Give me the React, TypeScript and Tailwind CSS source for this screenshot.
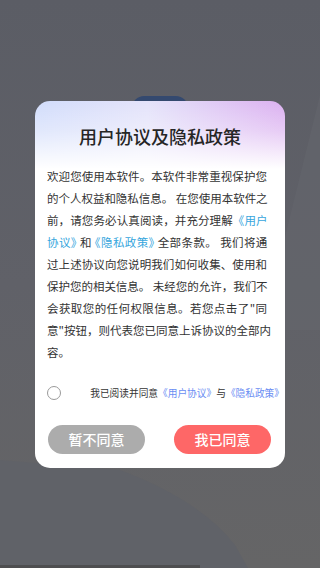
import React from "react";

const Link = ({ children }: { children: React.ReactNode }) => (
  <span className="text-[#36a6dd]">{children}</span>
);

const H = ({ children }: { children: React.ReactNode }) => (
  <span className="[font-feature-settings:'halt']">{children}</span>
);

export default function App() {
  const j = "h-[22px] whitespace-nowrap text-justify [text-align-last:justify]";
  return (
    <div className="relative w-[320px] h-[568px] overflow-hidden bg-[#626368] font-['Noto_Sans_CJK_SC','Noto_Sans',sans-serif]">
      <svg className="absolute inset-0" width="320" height="568" viewBox="0 0 320 568">
        <defs>
          <linearGradient id="bgv" x1="0" y1="0" x2="0" y2="1">
            <stop offset="0" stopColor="#5b5d65" />
            <stop offset="0.5" stopColor="#606168" />
            <stop offset="1" stopColor="#656566" />
          </linearGradient>
        </defs>
        <rect width="320" height="568" fill="url(#bgv)" />
        <path d="M320 95 L262 330 L320 330 Z" fill="#64656c" opacity="0.6" />
        <path d="M0 460 L120 470 Q200 500 235 545 L248 568 L0 568 Z" fill="#606268" />
        <rect x="0" y="565" width="200" height="3" fill="#4e4e50" />
      </svg>
      <div className="absolute left-[132px] top-[96px] w-[56px] h-[30px] rounded-[12px] bg-[#34496f]" />
      <div className="relative flex h-full items-center justify-center">
        <div className="w-[250px] h-[367px] rounded-[15px] overflow-hidden bg-[linear-gradient(to_bottom,rgba(255,255,255,0)_0px,rgba(255,255,255,0.35)_30px,#ffffff_68px),linear-gradient(to_right,#d1dcfb_0%,#e4e3fa_45%,#dbb0f0_100%)] flex flex-col">
          <div className="pt-[24px] h-[46px] text-center text-[18px] leading-[22px] text-[#262626] font-medium">
            用户协议及隐私政策
          </div>
          <div className="mt-[18px] ml-[12px] w-[220px] text-[11.5px] leading-[22px] text-[#333333]">
            <div className={j}>欢迎您使用本软件。本软件非常重视保护您</div>
            <div className={j + " tracking-[-0.62px]"}>的个人权益和隐私信息。 在您使用本软件之</div>
            <div className={j + " tracking-[-0.58px]"}>
              前，请您务必认真阅读，并充分理解<Link>《用户</Link>
            </div>
            <div className={j + " tracking-[-0.25px]"}>
              <Link>
                协议<H>》</H>
              </Link>{" "}
              和{" "}
              <Link>
                <H>《</H>隐私政策<H>》</H>
              </Link>{" "}
              全部条款。 我们将通
            </div>
            <div className={j}>过上述协议向您说明我们如何收集、使用和</div>
            <div className={j + " tracking-[-0.62px]"}>保护您的相关信息。 未经您的允许，我们不</div>
            <div className={j}>会获取您的任何权限信息。若您点击了"同</div>
            <div className={j}>意"按钮，则代表您已同意上诉协议的全部内</div>
            <div className="h-[22px] whitespace-nowrap">容。</div>
          </div>
          <div className="mt-[20px] h-[20px] flex items-center pl-[12px] pr-[1px]">
            <div className="w-[14px] h-[14px] rounded-full border border-[#9a9a9a] bg-white shrink-0" />
            <div className="flex-1 text-right text-[9.7px] leading-[20px] text-[#333333] whitespace-nowrap">
              我已阅读并同意<span className="text-[#6a8df3]">《用户协议》</span>与<span className="text-[#6a8df3]">《隐私政策》</span>
            </div>
          </div>
          <div className="mt-[22px] flex justify-between pl-[13px] pr-[14px]">
            <button className="w-[97px] h-[29px] rounded-full bg-[#acacac] text-white text-[14px] font-medium">
              暂不同意
            </button>
            <button className="w-[97px] h-[29px] rounded-full bg-[#fe6767] text-white text-[14px] font-medium">
              我已同意
            </button>
          </div>
        </div>
      </div>
    </div>
  );
}
